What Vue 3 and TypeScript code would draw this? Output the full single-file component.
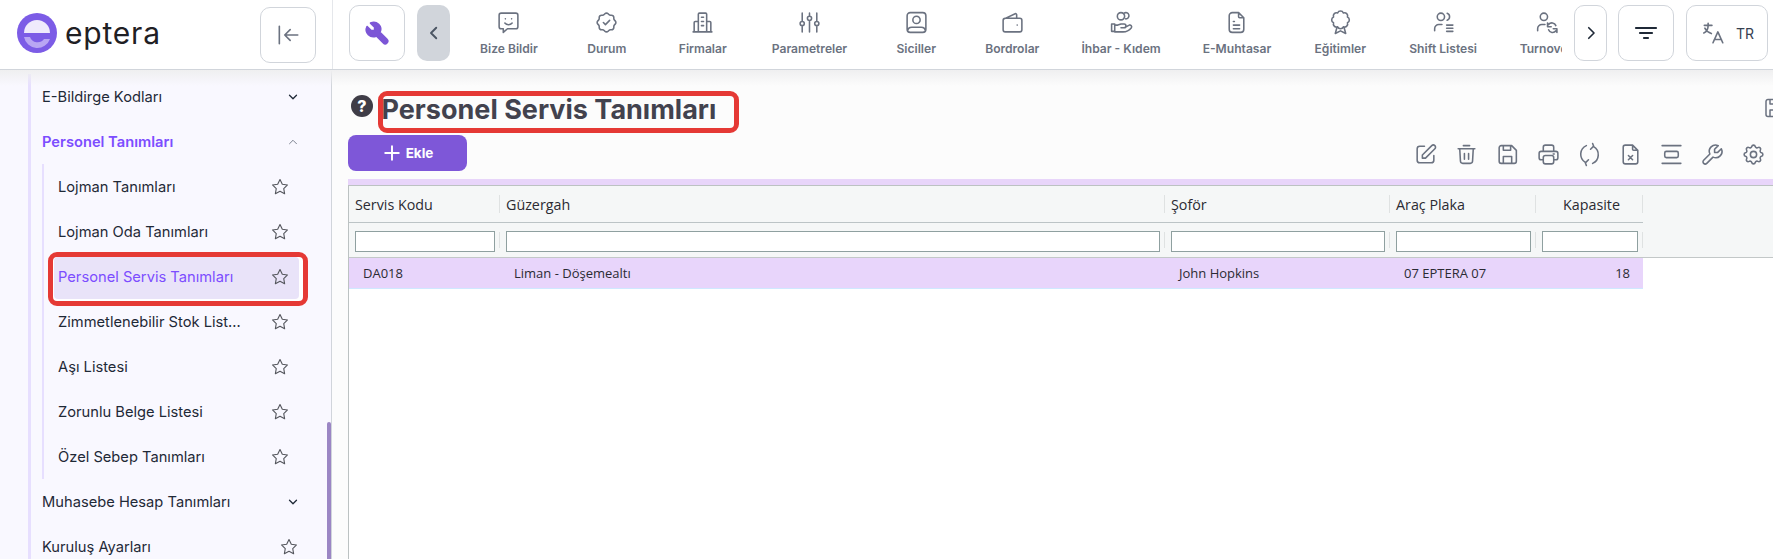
<template>
  <div class="app">
    <header class="topbar">
      <div class="brand">
        <svg class="logo" width="40" height="40" viewBox="0 0 40 40">
          <circle cx="20" cy="20" r="20" fill="#7c5ce6" />
          <path d="M7 20a13 13 0 0 1 26 0z" fill="#efeafc" />
          <path d="M7 24h6a8 8 0 0 0 14 2h6a13.500 13.500 0 0 1-26-2z" fill="#b9a6f3" />
        </svg>
        <span class="brand-name">eptera</span>
        <button class="box-btn collapse-btn">
          <svg width="26" height="26" viewBox="0 0 24 24" class="line-icon"><path d="M4 4v16M9 12h12M9 12l5 5M9 12l5-5" /></svg>
        </button>
      </div>
      <div class="actions">
        <button class="box-btn wrench-btn">
          <svg width="28" height="28" viewBox="0 0 24 24"><path d="M7 10h3V7L6.500 3.500a6 6 0 0 1 8 8l6 6a2 2 0 0 1-3 3l-6-6a6 6 0 0 1-8-8z" fill="#7c56d6" stroke="#7c56d6" stroke-width="1.500" stroke-linejoin="round" /></svg>
        </button>
        <button class="prev-btn">
          <svg width="18" height="18" viewBox="0 0 24 24" class="line-icon strong"><path d="M15 5l-7 7 7 7" /></svg>
        </button>
        <nav class="shortcuts">
          <a v-for="item in shortcuts" :key="item.label" class="shortcut">
            <svg width="25" height="25" viewBox="0 0 24 24" class="line-icon"><path :d="item.d" /></svg>
            <span>{{ item.label }}</span>
          </a>
        </nav>
        <button class="box-btn next-btn">
          <svg width="18" height="18" viewBox="0 0 24 24" class="line-icon dark"><path d="M9 5l7 7-7 7" /></svg>
        </button>
        <button class="box-btn filter-btn">
          <svg width="24" height="24" viewBox="0 0 24 24" class="line-icon dark"><path d="M2 7h20M6 12h12M10 17h4" /></svg>
        </button>
        <button class="box-btn lang-btn">
          <svg width="26" height="26" viewBox="0 0 24 24" class="line-icon"><path d="M4 5h7M7.500 3v2c0 3.500-1.500 6-4 7M4.500 7.500c1 2 3 4 6 5M12 21l4.500-10 4.500 10M19.800 18h-6.600" /></svg>
          <span>TR</span>
        </button>
      </div>
    </header>

    <div class="body">
      <aside class="sidebar">
        <div class="menu">
          <div class="menu-row">
            <span>E-Bildirge Kodları</span>
            <svg width="14" height="14" viewBox="0 0 24 24" class="line-icon dark chevron"><path d="M6 9l6 6 6-6" /></svg>
          </div>
          <div class="menu-row open">
            <span>Personel Tanımları</span>
            <svg width="14" height="14" viewBox="0 0 24 24" class="line-icon chevron"><path d="M6 15l6-6 6 6" /></svg>
          </div>
          <div class="submenu">
            <div v-for="item in subItems" :key="item" class="sub-row" :class="{ active: item === activeItem }">
              <div class="sub-inner">
                <span class="sub-label">{{ item }}</span>
                <svg width="18" height="18" viewBox="0 0 24 24" class="line-icon star"><path :d="starPath" /></svg>
              </div>
            </div>
          </div>
          <div class="menu-row">
            <span>Muhasebe Hesap Tanımları</span>
            <svg width="14" height="14" viewBox="0 0 24 24" class="line-icon dark chevron"><path d="M6 9l6 6 6-6" /></svg>
          </div>
          <div class="menu-row">
            <span>Kuruluş Ayarları</span>
            <svg width="18" height="18" viewBox="0 0 24 24" class="line-icon star"><path :d="starPath" /></svg>
          </div>
        </div>
        <div class="scroll-thumb"></div>
      </aside>

      <main class="content">
        <div class="title-row">
          <svg class="help" width="22" height="22" viewBox="0 0 22 22">
            <circle cx="11" cy="11" r="11" fill="#3f3d47" />
            <text x="11" y="16.500" text-anchor="middle" class="help-mark">?</text>
          </svg>
          <h1 class="title">Personel Servis Tanımları</h1>
          <svg class="page-save line-icon" width="24" height="24" viewBox="0 0 24 24"><path :d="floppyPath" /></svg>
        </div>

        <div class="tool-row">
          <button class="add-btn">
            <svg width="18" height="18" viewBox="0 0 24 24" class="plus"><path d="M12 3v18M3 12h18" /></svg>
            <span>Ekle</span>
          </button>
          <div class="tools">
            <svg v-for="(d, i) in toolIcons" :key="i" width="25" height="25" viewBox="0 0 24 24" class="line-icon"><path :d="d" /></svg>
          </div>
        </div>

        <div class="strip"></div>

        <section class="grid">
          <div class="head-wrap">
            <div class="grid-row head">
              <div v-for="col in columns" :key="col.title" class="head-cell" :class="{ center: col.center }">{{ col.title }}</div>
            </div>
            <div class="grid-row filters">
              <div v-for="col in columns" :key="col.title" class="filter-cell"><input type="text" /></div>
            </div>
          </div>
          <div class="grid-row data">
            <div v-for="col in columns" :key="col.title" class="data-cell" :class="{ right: col.center }">{{ col.value }}</div>
          </div>
        </section>
      </main>
    </div>
  </div>
</template>

<script setup lang="ts">
interface Shortcut {
  label: string
  d: string
}

interface Column {
  title: string
  value: string
  center?: boolean
}

const rosette =
  'M5 7.200a2.200 2.200 0 0 1 2.200-2.200h1a2.200 2.200 0 0 0 1.550-.640l.700-.700a2.200 2.200 0 0 1 3.120 0l.700.700c.412.410.970.640 1.550.640h1a2.200 2.200 0 0 1 2.200 2.200v1c0 .580.230 1.138.640 1.550l.700.700a2.200 2.200 0 0 1 0 3.120l-.700.700a2.200 2.200 0 0 0-.640 1.550v1a2.200 2.200 0 0 1-2.200 2.200h-1a2.200 2.200 0 0 0-1.550.640l-.700.700a2.200 2.200 0 0 1-3.120 0l-.700-.700a2.200 2.200 0 0 0-1.550-.640h-1a2.200 2.200 0 0 1-2.200-2.200v-1a2.200 2.200 0 0 0-.640-1.550l-.700-.700a2.200 2.200 0 0 1 0-3.120l.700-.700a2.200 2.200 0 0 0 .640-1.550v-1'

const shortcuts: Shortcut[] = [
  { label: 'Bize Bildir', d: 'M5 3h14a2 2 0 0 1 2 2v11a2 2 0 0 1-2 2h-8l-4 3.500V18H5a2 2 0 0 1-2-2V5a2 2 0 0 1 2-2zM9 8.500v.010M15 8.500v.010M8.500 12.500a4.500 4.500 0 0 0 7 0' },
  { label: 'Durum', d: rosette + 'M9 12l2 2 4-4' },
  { label: 'Firmalar', d: 'M3 21h18M8 21V4a1 1 0 0 1 1-1h6a1 1 0 0 1 1 1v17M4 21v-9a1 1 0 0 1 1-1h3M20 21v-9a1 1 0 0 0-1-1h-3M11 7h2M11 11h2M11 15h2' },
  { label: 'Parametreler', d: 'M5 3v8M5 15v6M12 3v3M12 10v11M19 3v8M19 15v6M3 13a2 2 0 1 0 4 0a2 2 0 1 0-4 0M10 8a2 2 0 1 0 4 0a2 2 0 1 0-4 0M17 13a2 2 0 1 0 4 0a2 2 0 1 0-4 0' },
  { label: 'Siciller', d: 'M6 2.500h12a3 3 0 0 1 3 3v13a3 3 0 0 1-3 3H6a3 3 0 0 1-3-3v-13a3 3 0 0 1 3-3zM8.500 9.500a3.500 3.500 0 1 0 7 0a3.500 3.500 0 1 0-7 0M3.500 20a4 4 0 0 1 4-3.500h9a4 4 0 0 1 4 3.500' },
  { label: 'Bordrolar', d: 'M16 8V4.500a1 1 0 0 0-1.400-.900L4 8.500M5 8h14a2 2 0 0 1 2 2v9a2 2 0 0 1-2 2H5a2 2 0 0 1-2-2v-9a2 2 0 0 1 2-2zM16.500 14.500h.010' },
  { label: 'İhbar - Kıdem', d: 'M8 6a3.500 3.500 0 1 0 7 0a3.500 3.500 0 1 0-7 0M14.500 3a3 3 0 1 1 1.500 5.500M2.500 13.500h3v7h-3zM5.500 14.500h3l3-1h3a1.500 1.500 0 0 1 0 3.500h-3M14.500 17l5-2.500a1.700 1.700 0 0 1 2 2.500c-2 2.500-4.500 4-8 4H5.500' },
  { label: 'E-Muhtasar', d: 'M14 2.500H8a3 3 0 0 0-3 3v13a3 3 0 0 0 3 3h8a3 3 0 0 0 3-3V7.500zM14 2.500v4a1 1 0 0 0 1 1h4M9 11h1M9 14.500h6M9 18h6' },
  { label: 'Eğitimler', d: 'M14.760 2.850A3 3 0 0 1 18.650 6.740A3 3 0 0 1 18.650 12.260A3 3 0 0 1 14.760 16.150A3 3 0 0 1 9.240 16.150A3 3 0 0 1 5.350 12.260A3 3 0 0 1 5.350 6.740A3 3 0 0 1 9.240 2.850A3 3 0 0 1 14.760 2.850zM8.500 17L7 22.500l5-2.500 5 2.500-1.500-5.500' },
  { label: 'Shift Listesi', d: 'M6 6.500a3.500 3.500 0 1 0 7 0a3.500 3.500 0 1 0-7 0M15.500 3.200a3.500 3.500 0 0 1 0 6.600M3.500 20v-2a4 4 0 0 1 4-4h3M15 14.500h6M15 17.500h6M15 20.500h6' },
  { label: 'Turnover', d: 'M6 6.500a3.500 3.500 0 1 0 7 0a3.500 3.500 0 1 0-7 0M3.500 20v-2a4 4 0 0 1 4-4h3M21 15a4 4 0 0 0-7-1l-1-1.500V16h3.500M14 19a4 4 0 0 0 7 1l1 1.500V18h-3.500' },
]

const subItems: string[] = [
  'Lojman Tanımları',
  'Lojman Oda Tanımları',
  'Personel Servis Tanımları',
  'Zimmetlenebilir Stok Listesi',
  'Aşı Listesi',
  'Zorunlu Belge Listesi',
  'Özel Sebep Tanımları',
]
const activeItem = 'Personel Servis Tanımları'

const starPath = 'M12 17.750l-6.172 3.245 1.179-6.873-5-4.867 6.900-1L12 2l3.086 6.255 6.900 1-5 4.867 1.179 6.873z'
const floppyPath = 'M6 3.500h10l4.500 4.500v10.500a2 2 0 0 1-2 2H6a2 2 0 0 1-2-2v-13a2 2 0 0 1 2-2zM8 3.500V8h7V3.500M8 20.500V14h8v6.500'

const toolIcons: string[] = [
  'M11 4H6.500A2.500 2.500 0 0 0 4 6.500v11A2.500 2.500 0 0 0 6.500 20h11a2.500 2.500 0 0 0 2.500-2.500V13M18 3.500a2.100 2.100 0 0 1 3 3l-9 9H9v-3z',
  'M4 6.500h16M9 3.500h6M10 11v5.500M14 11v5.500M5.500 6.500l.700 12a2.200 2.200 0 0 0 2.200 2h7.200a2.200 2.200 0 0 0 2.200-2l.700-12',
  floppyPath,
  'M17 17h2a2 2 0 0 0 2-2v-4a2 2 0 0 0-2-2H5a2 2 0 0 0-2 2v4a2 2 0 0 0 2 2h2M17 9V5a2 2 0 0 0-2-2H9a2 2 0 0 0-2 2v4M7 15a2 2 0 0 1 2-2h6a2 2 0 0 1 2 2v4a2 2 0 0 1-2 2H9a2 2 0 0 1-2-2zM16.500 11.500h1',
  'M16 4.500a9 9 0 0 1-1 16M8 19.500a9 9 0 0 1 1-16M13 7l3-3-1-2.500M11 17l-3 3 1 2.500',
  'M14 3v4a1 1 0 0 0 1 1h4M17 21H7a2 2 0 0 1-2-2V5a2 2 0 0 1 2-2h7l5 5v11a2 2 0 0 1-2 2zM10 13l4 4m0-4l-4 4',
  'M3 3.500h18M3 20.500h18M7 9h10a1.500 1.500 0 0 1 1.500 1.500v3A1.500 1.500 0 0 1 17 15H7a1.500 1.500 0 0 1-1.500-1.500v-3A1.500 1.500 0 0 1 7 9z',
  'M17 10h-3V7l3.500-3.500a6 6 0 0 0-8 8l-6 6a2 2 0 0 0 3 3l6-6a6 6 0 0 0 8-8z',
  'M10.325 4.317c.426-1.756 2.924-1.756 3.350 0a1.724 1.724 0 0 0 2.573 1.066c1.543-.940 3.310.826 2.370 2.370a1.724 1.724 0 0 0 1.065 2.572c1.756.426 1.756 2.924 0 3.350a1.724 1.724 0 0 0-1.066 2.573c.940 1.543-.826 3.310-2.370 2.370a1.724 1.724 0 0 0-2.572 1.065c-.426 1.756-2.924 1.756-3.350 0a1.724 1.724 0 0 0-2.573-1.066c-1.543.940-3.310-.826-2.370-2.370a1.724 1.724 0 0 0-1.065-2.572c-1.756-.426-1.756-2.924 0-3.350a1.724 1.724 0 0 0 1.066-2.573c-.940-1.543.826-3.310 2.370-2.370c1 .608 2.296.070 2.572-1.065zM9 12a3 3 0 1 0 6 0a3 3 0 0 0-6 0',
]

const columns: Column[] = [
  { title: 'Servis Kodu', value: 'DA018' },
  { title: 'Güzergah', value: 'Liman - Döşemealtı' },
  { title: 'Şoför', value: 'John Hopkins' },
  { title: 'Araç Plaka', value: '07 EPTERA 07' },
  { title: 'Kapasite', value: '18', center: true },
]
</script>

<style>
html,
body {
  margin: 0;
  overflow: hidden;
}
</style>

<style scoped>
.app {
  height: 559px;
  width: 1773px;
  display: flex;
  flex-direction: column;
  overflow: hidden;
  font-family: Inter, "Noto Sans", sans-serif;
  background: #fcfcfc;
}

.line-icon {
  fill: none;
  stroke: #6b7280;
  stroke-width: 1.5;
  stroke-linecap: round;
  stroke-linejoin: round;
  flex-shrink: 0;
}

.line-icon.strong {
  stroke: #4b5563;
  stroke-width: 2.5;
}

.line-icon.dark {
  stroke: #1f2937;
  stroke-width: 2.2;
}

.topbar {
  height: 70px;
  flex-shrink: 0;
  display: flex;
  background: #fff;
  border-bottom: 1px solid #d1d5db;
  box-sizing: border-box;
}

.brand {
  width: 333px;
  flex-shrink: 0;
  display: flex;
  align-items: center;
  padding: 0 16px 4px 17px;
  box-sizing: border-box;
  border-right: 1px solid #e5e7eb;
}

.brand-name {
  margin-left: 8px;
  font-size: 30px;
  letter-spacing: 0.8px;
  color: #1f2024;
  line-height: 40px;
}

.box-btn {
  height: 56px;
  background: #fff;
  border: 1px solid #d1d5db;
  border-radius: 10px;
  display: flex;
  align-items: center;
  justify-content: center;
  padding: 0;
  box-sizing: border-box;
  flex-shrink: 0;
}

.collapse-btn {
  width: 56px;
  margin-left: auto;
  margin-top: 4px;
}

.actions {
  flex: 1;
  min-width: 0;
  display: flex;
  align-items: flex-start;
  padding: 5px 5px 0 16px;
}

.wrench-btn {
  width: 56px;
  margin-right: 12px;
}

.prev-btn {
  width: 33px;
  height: 56px;
  background: #d1d5db;
  border: none;
  border-radius: 10px;
  padding: 0;
  display: flex;
  align-items: center;
  justify-content: center;
  flex-shrink: 0;
}

.shortcuts {
  width: 1112px;
  flex-shrink: 0;
  display: flex;
  overflow: hidden;
  padding-left: 9px;
  box-sizing: border-box;
}

.shortcut {
  min-width: 96px;
  flex-shrink: 0;
  box-sizing: border-box;
  padding: 5px 21px 0;
  display: flex;
  flex-direction: column;
  align-items: center;
  gap: 6px;
  font-size: 12.1px;
  font-weight: 600;
  color: #6b7280;
  line-height: 15px;
  white-space: nowrap;
}

.next-btn {
  width: 33px;
  margin-left: 12px;
}

.filter-btn {
  width: 56px;
  margin-left: 11px;
}

.lang-btn {
  width: 82px;
  margin-left: 12px;
  gap: 10px;
  font-family: inherit;
  font-size: 14px;
  color: #374151;
}

.body {
  flex: 1;
  display: flex;
  min-height: 0;
  position: relative;
}

.body::after {
  content: '';
  position: absolute;
  left: 0;
  right: 0;
  top: 0;
  height: 16px;
  background: linear-gradient(#efeff0, rgba(239, 239, 240, 0));
  pointer-events: none;
}

.sidebar {
  width: 332px;
  flex-shrink: 0;
  position: relative;
  box-sizing: border-box;
  background: #f9f8ff;
  border-right: 1px solid #d1d5db;
  overflow: hidden;
  padding-top: 4px;
}

.menu {
  margin-left: 28px;
  border-left: 3px solid #e7dfff;
  padding-left: 11px;
  font-size: 14.7px;
  color: #1f2937;
}

.menu-row {
  height: 45px;
  display: flex;
  align-items: center;
  justify-content: space-between;
  padding-right: 33px;
  white-space: nowrap;
}

.menu-row.open {
  color: #7c4dff;
  font-weight: 600;
}

.chevron {
  margin-right: -2px;
}

.submenu {
  border-left: 2px solid #e7dfff;
}

.sub-row {
  width: 255px;
  height: 45px;
  padding: 3px 0 0 10px;
  box-sizing: border-box;
  position: relative;
  isolation: isolate;
}

.sub-inner {
  height: 42px;
  padding: 0 10px 3px 4px;
  box-sizing: border-box;
  display: flex;
  align-items: center;
  justify-content: space-between;
  border-radius: 4px;
}

.sub-label {
  width: 186px;
  overflow: hidden;
  white-space: nowrap;
  text-overflow: ellipsis;
}

.sub-row.active {
  color: #7c4dff;
}

.sub-row.active::before {
  content: '';
  position: absolute;
  left: 4px;
  right: -9px;
  top: -2px;
  bottom: -7px;
  box-sizing: border-box;
  background: #fff;
  border: 5px solid #e53935;
  border-radius: 9px;
  z-index: -1;
}

.sub-row.active .sub-inner {
  background: #e9e3f9;
}

.star {
  stroke: #55575e;
}

.scroll-thumb {
  position: absolute;
  right: 0;
  top: 352px;
  bottom: 0;
  width: 4px;
  background: #9b86c4;
  border-radius: 3px 3px 0 0;
}

.content {
  flex: 1;
  min-width: 0;
  display: flex;
  flex-direction: column;
  padding: 21px 0 0 16px;
  overflow: hidden;
}

.title-row {
  height: 42px;
  display: flex;
  align-items: flex-start;
  flex-shrink: 0;
}

.help {
  margin: 4px 5px 0 3px;
  flex-shrink: 0;
}

.help-mark {
  font-family: Inter, sans-serif;
  font-size: 16px;
  font-weight: 800;
  fill: #fff;
}

.title {
  margin: 0;
  width: 361px;
  height: 42px;
  box-sizing: border-box;
  border: 5px solid #e53935;
  border-radius: 9px;
  font-size: 27px;
  font-weight: 700;
  line-height: 28px;
  text-indent: -1.5px;
  color: #42424e;
  white-space: nowrap;
}

.page-save {
  margin-left: auto;
  margin-right: -13px;
  margin-top: 5px;
}

.tool-row {
  margin-top: 2px;
  height: 36px;
  display: flex;
  justify-content: space-between;
  align-items: center;
  flex-shrink: 0;
}

.add-btn {
  width: 119px;
  height: 36px;
  border: none;
  border-radius: 8px;
  background: #7e57d8;
  color: #fff;
  display: flex;
  align-items: center;
  justify-content: center;
  gap: 5px;
  font-family: inherit;
  font-size: 13.5px;
  font-weight: 700;
  padding: 0 0 0 1px;
}

.plus {
  fill: none;
  stroke: #fff;
  stroke-width: 2.6;
  stroke-linecap: round;
}

.tools {
  display: flex;
  gap: 16px;
  margin-right: 7px;
  margin-top: 3px;
}

.strip {
  height: 6px;
  margin-top: 8px;
  background: #e8d5fa;
  flex-shrink: 0;
}

.grid {
  flex: 1;
  background: #fff;
  border-left: 1px solid #bcc2c2;
  font-family: "Open Sans", "Noto Sans", sans-serif;
  font-size: 14.3px;
  color: #2b2b33;
}

.head-wrap {
  background: #f5f7f7;
  border-top: 1px solid #bcc2c2;
  border-bottom: 1px solid #c3c8c8;
}

.grid-row {
  display: grid;
  grid-template-columns: 151px 665px 225px 146px 107px;
  width: 1294px;
}

.head {
  height: 36px;
  border-bottom: 1px solid #bcc4c6;
}

.head-cell {
  display: flex;
  align-items: center;
  padding-left: 6px;
  position: relative;
}

.head-cell.center {
  justify-content: center;
  padding-left: 4px;
}

.head-cell::after,
.filter-cell::after {
  content: '';
  position: absolute;
  right: 0;
  top: 9px;
  bottom: 9px;
  width: 1px;
  background: #dfe2e2;
}

.filters {
  height: 34px;
}

.filter-cell {
  position: relative;
  padding: 8px 5px 0 6px;
}

.filter-cell input {
  display: block;
  width: 100%;
  height: 21px;
  box-sizing: border-box;
  border: 1px solid #8fa0a0;
  background: #fff;
  padding: 0;
}

.data {
  height: 31px;
  background: #e8d5fb;
  border-bottom: 1px solid #cfe8ff;
  box-sizing: border-box;
  font-size: 13px;
}

.data-cell {
  display: flex;
  align-items: center;
  padding-left: 14px;
  white-space: nowrap;
}

.data-cell.right {
  justify-content: flex-end;
  padding: 0 13px 0 0;
}
</style>
